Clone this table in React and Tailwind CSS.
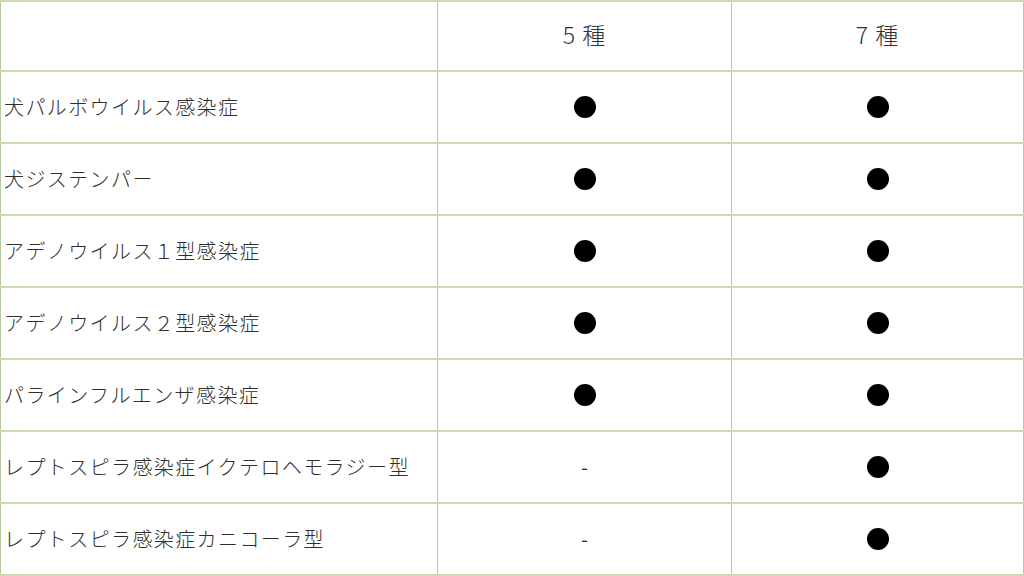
const rows = [
    { name: "犬パルボウイルス感染症", five: true, seven: true },
    { name: "犬ジステンパー", five: true, seven: true },
    { name: "アデノウイルス１型感染症", five: true, seven: true },
    { name: "アデノウイルス２型感染症", five: true, seven: true },
    { name: "パラインフルエンザ感染症", five: true, seven: true },
    { name: "レプトスピラ感染症イクテロヘモラジー型", five: false, seven: true },
    { name: "レプトスピラ感染症カニコーラ型", five: false, seven: true },
]

const Mark = ({ on }) => {
    if (on) {
        return <span className="block w-[22px] h-[22px] rounded-full bg-black"></span>
    }
    return <span className="text-[20px] text-[#333]">-</span>
}

const App = () => {
    return (
        <div
            className="w-[1024px] h-[576px] bg-white overflow-hidden text-[#2f2f2f]"
            style={{ fontFamily: '"Noto Sans CJK JP", "Noto Sans", sans-serif' }}
        >
            <div className="grid grid-cols-[438px_294px_1fr] h-[72px] border-t-2 border-b-2 border-[#c9dbb6]">
                <div className="border-l border-r border-[#b5cd9c]"></div>
                <div className="flex items-center justify-center border-r border-[#b5cd9c] text-[23px] font-light tracking-[1px] pb-1">
                    5 種
                </div>
                <div className="flex items-center justify-center border-r border-[#b5cd9c] text-[23px] font-light tracking-[1px] pb-1">
                    7 種
                </div>
            </div>
            {rows.map((r) => (
                <div key={r.name} className="grid grid-cols-[438px_294px_1fr] h-[72px] border-b-2 border-[#c9dbb6]">
                    <div className="flex items-center pl-[3px] border-l border-r border-[#b5cd9c] text-[20px] font-light tracking-[1.4px] whitespace-nowrap">
                        {r.name}
                    </div>
                    <div className="flex items-center justify-center border-r border-[#b5cd9c]">
                        <Mark on={r.five} />
                    </div>
                    <div className="flex items-center justify-center border-r border-[#b5cd9c]">
                        <Mark on={r.seven} />
                    </div>
                </div>
            ))}
        </div>
    )
}

export default App
